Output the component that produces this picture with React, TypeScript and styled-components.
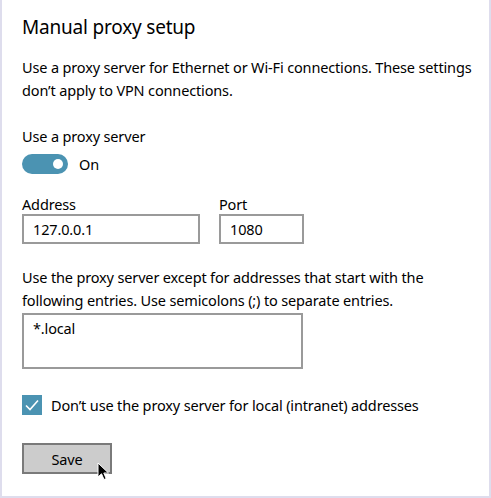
import React from "react";
import styled, { createGlobalStyle } from "styled-components";

const Global = createGlobalStyle`
  html, body { margin: 0; padding: 0; background: #ffffff; }
  body { font-family: "Noto Sans", "Open Sans", sans-serif; color: #000; }
`;

const Panel = styled.div`
  box-sizing: border-box;
  width: 491px;
  height: 498px;
  border-left: 2px solid #dedded;
  border-right: 2px solid #dedded;
  border-bottom: 2px solid #dedded;
  background: #fff;
  padding: 13px 0 0 20px;
  display: flex;
  flex-direction: column;
`;

const Title = styled.h1`
  margin: 0;
  font-size: 19px;
  font-weight: 400;
  line-height: 28px;
  letter-spacing: -0.2px;
`;

const Para = styled.p<{ $top: number }>`
  margin: ${(p) => p.$top}px 0 0 0;
  font-size: 14.5px;
  line-height: 23px;
  letter-spacing: -0.15px;
  width: 460px;
`;

const Label = styled.div<{ $top?: number }>`
  margin-top: ${(p) => p.$top ?? 0}px;
  font-size: 14.5px;
  line-height: 20px;
  letter-spacing: -0.15px;
`;

const ToggleRow = styled.div`
  display: flex;
  align-items: center;
  gap: 11px;
  margin-top: 8px;
  height: 20px;
`;

const Track = styled.div`
  width: 46px;
  height: 20px;
  border-radius: 10px;
  background: #4b93b2;
  display: flex;
  align-items: center;
  justify-content: flex-end;
  padding-right: 5px;
  box-sizing: border-box;
`;

const Knob = styled.div`
  width: 10px;
  height: 10px;
  border-radius: 50%;
  background: #fff;
`;

const FieldRow = styled.div`
  display: flex;
  gap: 19px;
  margin-top: 20px;
`;

const Field = styled.div`
  display: flex;
  flex-direction: column;
`;

const Input = styled.div<{ $w: number; $h?: number; $top?: number }>`
  box-sizing: border-box;
  width: ${(p) => p.$w}px;
  height: ${(p) => p.$h ?? 30}px;
  margin-top: ${(p) => p.$top ?? 0}px;
  border: 2px solid #9a9a9a;
  padding: 3px 9px;
  font-size: 14.5px;
  line-height: 20px;
  letter-spacing: -0.15px;
`;

const CheckRow = styled.div`
  display: flex;
  align-items: center;
  gap: 9px;
  margin-top: 26px;
`;

const Box = styled.div`
  width: 20px;
  height: 20px;
  background: #4b93b2;
  display: flex;
  align-items: center;
  justify-content: center;
`;

const Button = styled.div`
  position: relative;
  box-sizing: border-box;
  margin-top: 28px;
  width: 90px;
  height: 31px;
  background: #cccccc;
  border: 2px solid #7a7a7a;
  display: flex;
  align-items: center;
  justify-content: center;
  font-size: 14.5px;
  letter-spacing: -0.15px;
`;

const Cursor = styled.svg`
  position: absolute;
  left: 73px;
  top: 17px;
`;

export default function App() {
  return (
    <>
      <Global />
      <Panel>
        <Title>Manual proxy setup</Title>
        <Para $top={15}>
          Use a proxy server for Ethernet or Wi-Fi connections. These settings
          don’t apply to VPN connections.
        </Para>
        <Label $top={24}>Use a proxy server</Label>
        <ToggleRow>
          <Track>
            <Knob />
          </Track>
          <Label>On</Label>
        </ToggleRow>
        <FieldRow>
          <Field>
            <Label>Address</Label>
            <Input $w={178}>127.0.0.1</Input>
          </Field>
          <Field>
            <Label>Port</Label>
            <Input $w={85}>1080</Input>
          </Field>
        </FieldRow>
        <Para $top={22}>
          Use the proxy server except for addresses that start with the
          following entries. Use semicolons (;) to separate entries.
        </Para>
        <Input $w={281} $h={56} $top={1}>
          *.local
        </Input>
        <CheckRow>
          <Box>
            <svg width="14" height="12" viewBox="0 0 14 12">
              <path d="M1 6.5 L5 10.5 L13 1.5" fill="none" stroke="#fff" strokeWidth="1.6" />
            </svg>
          </Box>
          <Label>Don’t use the proxy server for local (intranet) addresses</Label>
        </CheckRow>
        <Button>
          Save
          <Cursor width="14" height="20" viewBox="0 0 14 20">
            <path
              d="M1 1 L1 15 L4.5 11.8 L7 17.5 L9.2 16.6 L6.8 11 L11.5 11 Z"
              fill="#000"
              stroke="#fff"
              strokeWidth="1"
            />
          </Cursor>
        </Button>
      </Panel>
    </>
  );
}
